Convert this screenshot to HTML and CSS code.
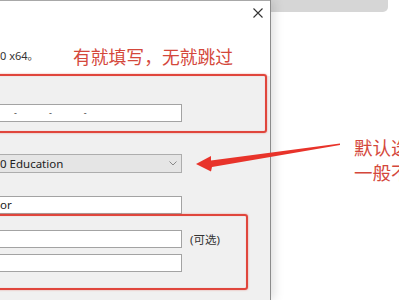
FILE: index.html
```html
<!DOCTYPE html>
<html>
<head>
<meta charset="utf-8">
<link rel="stylesheet" href="styles.css">
</head>
<body>
<div class="page">
  <div class="dialog">
    <div class="head">
      <div class="titlebar">
        <svg class="close" width="10" height="10" viewBox="0 0 10 10"><path d="M0.5 0.5L9.5 9.5M9.5 0.5L0.5 9.5" stroke="#333" stroke-width="1.1" fill="none"/></svg>
      </div>
      <div class="head-row">
        <span class="os">0 x64。</span>
        <span class="note">有就填写，无就跳过</span>
      </div>
    </div>
    <div class="body">
      <div class="field key"><span>-</span><span>-</span><span>-</span></div>
      <div class="select"><span>0 Education</span>
        <svg width="8" height="5" viewBox="0 0 8 5"><path d="M0.5 0.5L4 4L7.5 0.5" stroke="#888" stroke-width="1" fill="none"/></svg>
      </div>
      <div class="field text">or</div>
      <div class="row"><div class="field"></div><span class="opt">(可选)</span></div>
      <div class="field third"></div>
    </div>
    <div class="mark mark1"></div>
    <div class="mark mark2"></div>
  </div>
  <div class="side">
    <div class="tab"></div>
    <div class="side-note">默认选<br>一般不</div>
  </div>
  <svg class="arrow" width="399" height="300" viewBox="0 0 399 300">
    <polygon points="196,164 211,156 211,160.5 340,143.5 340,145 212,167 211,171.5" fill="#e8332a"/>
  </svg>
</div>
</body>
</html>
```
FILE: styles.css
```css
html, body {
  margin: 0;
  padding: 0;
  background: #fff;
}
.page {
  position: relative;
  width: 399px;
  height: 300px;
  overflow: hidden;
  display: flex;
  font-family: "Noto Sans", "Noto Sans CJK SC", sans-serif;
  color: #222;
}
.dialog {
  position: relative;
  z-index: 1;
  box-sizing: border-box;
  width: 271px;
  height: 300px;
  flex: none;
  background: #f0f0f0;
  border-right: 1px solid #8c8c8c;
  box-shadow: 3px 0 10px rgba(0,0,0,0.13);
  display: flex;
  flex-direction: column;
}
.head {
  box-sizing: border-box;
  height: 76px;
  background: #fff;
  border-top: 1px solid #a8a8a8;
  display: flex;
  flex-direction: column;
}
.titlebar {
  display: flex;
  justify-content: flex-end;
  padding: 7px 7px 0 0;
}
.close {
  display: block;
}
.head-row {
  display: flex;
  align-items: center;
  margin-top: 28px;
}
.os {
  flex: 0 0 73px;
  font-size: 11px;
  color: #333;
  margin-top: -3px;
}
.note {
  font-family: "Noto Sans CJK SC", sans-serif;
  font-size: 17.8px;
  line-height: 20px;
  color: #d4473b;
}
.body {
  display: flex;
  flex-direction: column;
  align-items: flex-start;
}
.field {
  box-sizing: border-box;
  width: 182px;
  height: 18px;
  background: #fff;
  border: 1px solid #a3a3a3;
  border-left: none;
  font-size: 11.5px;
  line-height: 16px;
}
.key {
  margin-top: 28px;
  display: flex;
  gap: 32px;
  padding-left: 14px;
  font-size: 9px;
  color: #444;
}
.select {
  box-sizing: border-box;
  margin-top: 32px;
  width: 182px;
  height: 19px;
  background: #e5e5e5;
  border: 1px solid #adadad;
  border-left: none;
  display: flex;
  align-items: center;
  justify-content: space-between;
  padding-right: 4px;
  font-size: 11.5px;
  color: #222;
}
.text {
  margin-top: 23px;
  padding-left: 0;
  color: #222;
}
.row {
  margin-top: 16px;
  display: flex;
  align-items: center;
  gap: 8px;
}
.opt {
  font-size: 11.5px;
  color: #333;
}
.third {
  margin-top: 6px;
}
.mark {
  position: absolute;
  box-sizing: border-box;
  border: 2px solid #e0463c;
  border-radius: 3px;
  box-shadow: 0 0 2px rgba(224,70,60,0.55), inset 0 0 1px rgba(224,70,60,0.4);
}
.mark1 {
  left: -10px;
  top: 74px;
  width: 277px;
  height: 59px;
}
.mark2 {
  left: -10px;
  top: 214px;
  width: 258px;
  height: 76px;
}
.side {
  flex: 1;
  display: flex;
  flex-direction: column;
}
.tab {
  width: 117px;
  height: 12px;
  background: #d6d6d6;
  border-bottom-right-radius: 5px;
}
.side-note {
  margin-top: 123px;
  padding-left: 83px;
  font-family: "Noto Sans CJK SC", sans-serif;
  font-size: 18.5px;
  line-height: 25px;
  color: #d4473b;
  white-space: nowrap;
}
.arrow {
  position: absolute;
  left: 0;
  top: 0;
  z-index: 2;
  pointer-events: none;
}
```
